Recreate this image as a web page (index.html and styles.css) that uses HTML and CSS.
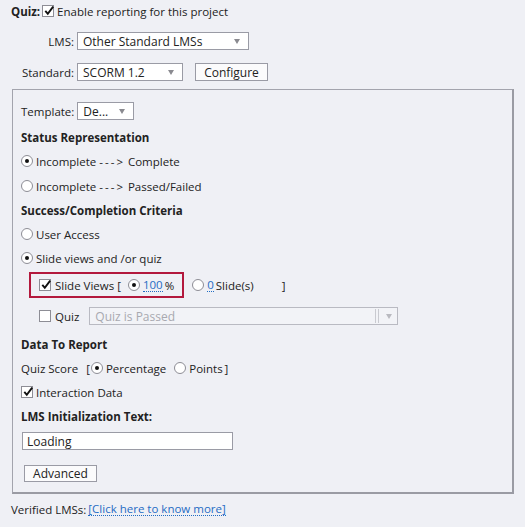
FILE: index.html
```html
<!DOCTYPE html>
<html>
<head>
<meta charset="utf-8">
<link rel="stylesheet" href="styles.css">
</head>
<body>
<div class="page">
  <div class="row r-quiz">
    <span class="b">Quiz:</span>
    <span class="cb checked"><svg viewBox="0 0 12 12"><path d="M2.3 5.8 L4.8 8.8 L10.2 1.6" /></svg></span>
    <span>Enable reporting for this project</span>
  </div>
  <div class="row r-field">
    <span class="lbl">LMS:</span>
    <div class="select s-lms"><span>Other Standard LMSs</span><i class="arrow"></i></div>
  </div>
  <div class="row r-field">
    <span class="lbl">Standard:</span>
    <div class="select s-std"><span>SCORM 1.2</span><i class="arrow"></i></div>
    <div class="btn b-config">Configure</div>
  </div>

  <div class="panel">
    <div class="row h24">
      <span>Template:</span>
      <div class="select s-tpl"><span>De...</span><i class="arrow"></i></div>
    </div>
    <div class="row head first">Status Representation</div>
    <div class="row h24"><span class="rd on"></span><span>Incomplete <span class="dash">---&gt;</span> Complete</span></div>
    <div class="row h24 mt1"><span class="rd"></span><span>Incomplete <span class="dash">---&gt;</span> Passed/Failed</span></div>
    <div class="row head">Success/Completion Criteria</div>
    <div class="row h24"><span class="rd"></span><span>User Access</span></div>
    <div class="row h24"><span class="rd on"></span><span>Slide views and /or quiz</span></div>
    <div class="redbox">
      <span class="cb checked"><svg viewBox="0 0 12 12"><path d="M2.3 5.8 L4.8 8.8 L10.2 1.6" /></svg></span>
      <span class="sv">Slide Views [</span>
      <span class="rd on"></span>
      <span class="val">100</span><span class="pct">%</span>
      <span class="outside">
        <span class="rd"></span>
        <span class="val">0</span><span class="slides">Slide(s)</span>
        <span class="close">]</span>
      </span>
    </div>
    <div class="row h24 quizrow">
      <span class="cb"></span>
      <span class="qz">Quiz</span>
      <div class="select s-quiz disabled"><span>Quiz is Passed</span><i class="sep"></i><i class="arrow"></i></div>
    </div>
    <div class="row head mt4">Data To Report</div>
    <div class="row h24">
      <span class="qs">Quiz Score</span>
      <span class="brk">[</span>
      <span class="rd on"></span><span class="perc">Percentage</span>
      <span class="rd"></span><span>Points</span><span class="brk2">]</span>
    </div>
    <div class="row h24"><span class="cb checked"><svg viewBox="0 0 12 12"><path d="M2.3 5.8 L4.8 8.8 L10.2 1.6" /></svg></span><span>Interaction Data</span></div>
    <div class="row head">LMS Initialization Text:</div>
    <div class="input">Loading</div>
    <div class="btn b-adv">Advanced</div>
  </div>

  <div class="row verified">
    <span>Verified LMSs:</span>
    <span class="link">[Click here to know more]</span>
  </div>
</div>
</body>
</html>
```

FILE: styles.css
```css
html, body {
  margin: 0;
  padding: 0;
  background: #eff0f5;
}
body {
  font-family: "Open Sans", "DejaVu Sans", sans-serif;
  font-size: 11.5px;
  color: #222;
  width: 525px;
  height: 527px;
  overflow: hidden;
}
.page {
  display: flex;
  flex-direction: column;
}
.row {
  display: flex;
  align-items: center;
  white-space: nowrap;
}
.b { font-weight: 700; }
.dash { letter-spacing: 2px; }
.r-quiz {
  height: 22px;
  padding-left: 11px;
}
.r-quiz .b { margin-right: 2px; }
.r-field {
  height: 24px;
  margin-top: 7px;
}
.lbl {
  width: 74px;
  text-align: right;
  margin-right: 3px;
}
.cb {
  display: inline-block;
  box-sizing: border-box;
  width: 12px;
  height: 12px;
  border: 1px solid #8d8d95;
  background: #fff;
  position: relative;
  flex: none;
  margin-right: 3px;
}
.cb svg {
  position: absolute;
  left: 0;
  top: -1px;
  width: 12px;
  height: 12px;
  overflow: visible;
}
.cb path {
  fill: none;
  stroke: #111;
  stroke-width: 1.9;
}
.rd {
  display: inline-block;
  box-sizing: border-box;
  width: 12px;
  height: 12px;
  border: 1px solid #8d8d95;
  border-radius: 50%;
  background: #fff;
  position: relative;
  flex: none;
  margin-right: 3px;
}
.rd.on::after {
  content: "";
  position: absolute;
  left: 3px;
  top: 3px;
  width: 4px;
  height: 4px;
  border-radius: 50%;
  background: #111;
}
.select {
  box-sizing: border-box;
  height: 18px;
  border: 1px solid #9a9ba5;
  background: #fff;
  display: flex;
  align-items: center;
  padding-left: 5px;
  position: relative;
  font-size: 12px;
}
.arrow {
  position: absolute;
  right: 8px;
  top: 6px;
  width: 0;
  height: 0;
  border-left: 3.5px solid transparent;
  border-right: 3.5px solid transparent;
  border-top: 5px solid #8a8a90;
}
.s-lms { width: 172px; }
.s-std { width: 106px; margin-right: 12px; }
.s-tpl { width: 57px; margin-left: 3px; }
.btn {
  box-sizing: border-box;
  height: 18px;
  border: 1px solid #9a9ba5;
  background: #fbfbfc;
  display: flex;
  align-items: center;
  justify-content: center;
  font-size: 12px;
}
.b-config { width: 73px; }
.panel {
  margin: 5px 0 0 12px;
  width: 502px;
  box-sizing: border-box;
  border: 1px solid #a3a4ad;
  border-right: 2px solid #9a9ba3;
  border-bottom: 2px solid #9a9ba3;
  padding: 9px 8px 10px 8px;
  display: flex;
  flex-direction: column;
}
.h24 { height: 24px; }
.mt1 { margin-top: 1px; }
.mt4 { margin-top: 4px; }
.head {
  font-weight: 700;
  height: 24px;
}
.head.first { height: 23px; margin-top: 3px; }
.redbox {
  margin: 2px 0 0 8px;
  width: 155px;
  height: 26px;
  box-sizing: border-box;
  border: 2px solid #b3193d;
  display: flex;
  align-items: center;
  padding-left: 8px;
  white-space: nowrap;
  overflow: visible;
}
.redbox .cb { margin-right: 4px; }
.sv { margin-right: 7px; }
.val {
  color: #1f6cc4;
  border-bottom: 1px dotted #1f6cc4;
  line-height: 12px;
}
.pct { margin-left: 2px; }
.outside {
  display: flex;
  align-items: center;
  margin-left: 18px;
}
.slides { margin-left: 2px; }
.close { margin-left: 28px; }
.quizrow {
  margin-top: 6px;
  padding-left: 18px;
}
.qz { margin-left: 1px; margin-right: 10px; }
.s-quiz {
  width: 309px;
}
.s-quiz.disabled {
  background: #f2f3f7;
  border-color: #b9bac2;
  color: #a8a9b0;
}
.s-quiz .sep {
  position: absolute;
  right: 18px;
  top: 1px;
  width: 2px;
  height: 14px;
  border-left: 1px solid #c9cad0;
  border-right: 1px solid #c9cad0;
}
.s-quiz .arrow {
  right: 5px;
  border-top-color: #b9bac0;
}
.qs { margin-right: 8px; }
.brk { margin-right: 1px; }
.perc { margin-right: 8px; }
.brk2 { margin-left: 2px; }
.input {
  margin: 4px 0 0 1px;
  width: 211px;
  height: 18px;
  box-sizing: border-box;
  border: 1px solid #9a9ba5;
  background: #fff;
  padding-left: 4px;
  display: flex;
  align-items: center;
  font-size: 12px;
}
.b-adv {
  margin: 15px 0 0 3px;
  width: 73px;
  height: 17px;
}
.verified {
  height: 24px;
  margin-top: 3px;
  padding-left: 11px;
}
.link {
  margin-left: 2px;
  color: #1f6cc4;
  border-bottom: 1px dotted #1f6cc4;
  line-height: 12px;
}
```
